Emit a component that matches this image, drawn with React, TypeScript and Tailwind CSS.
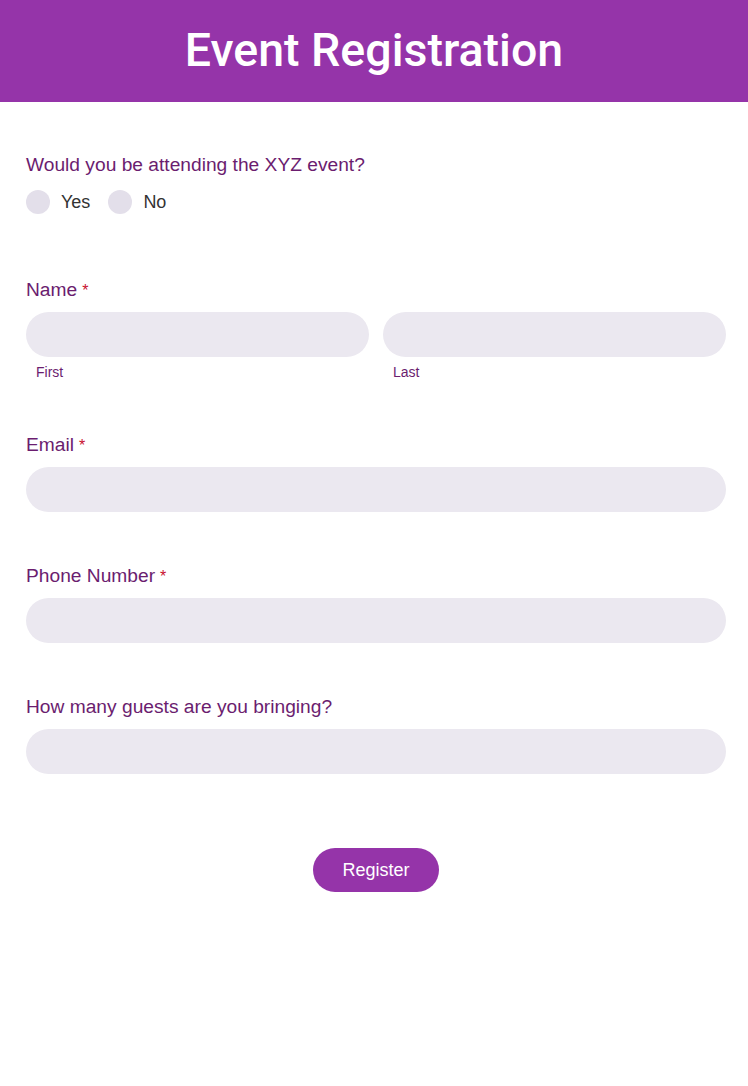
import React from "react";

function Label({ text, required }: { text: string; required?: boolean }) {
  return (
    <div className="h-[22px] text-[19.2px] leading-[22px] text-[#6b1d6f]">
      {text}
      {required && <span className="ml-[5px] text-[16px] leading-none text-[#c8102e]">*</span>}
    </div>
  );
}

function Input() {
  return <div className="h-[45px] w-full rounded-full bg-[#ebe8f0]" />;
}

export default function App() {
  return (
    <div className="min-h-[1086px] w-full bg-white" style={{ fontFamily: '"Liberation Sans", Arial, sans-serif' }}>
      <div className="flex h-[102px] items-center justify-center bg-[#9534a9]">
        <h1 className="text-[46.5px] font-medium text-white" style={{ fontFamily: "Roboto, sans-serif" }}>
          Event Registration
        </h1>
      </div>
      <div className="pl-[26px] pr-[22px] pt-[52px]">
        <Label text="Would you be attending the XYZ event?" />
        <div className="mt-[14px] flex items-center">
          <div className="h-[24px] w-[24px] rounded-full bg-[#e3dfea]" />
          <span className="ml-[11px] text-[18px] leading-[22px] text-[#333]">Yes</span>
          <div className="ml-[18px] h-[24px] w-[24px] rounded-full bg-[#e3dfea]" />
          <span className="ml-[11px] text-[18px] leading-[22px] text-[#333]">No</span>
        </div>

        <div className="mt-[65px]">
          <Label text="Name" required />
          <div className="mt-[11px] flex gap-[14px]">
            <div className="flex-1">
              <Input />
              <div className="mt-[7px] pl-[10px] text-[14px] leading-[17px] text-[#6b1d6f]">First</div>
            </div>
            <div className="flex-1">
              <Input />
              <div className="mt-[7px] pl-[10px] text-[14px] leading-[17px] text-[#6b1d6f]">Last</div>
            </div>
          </div>
        </div>

        <div className="mt-[53px]">
          <Label text="Email" required />
          <div className="mt-[11px]"><Input /></div>
        </div>

        <div className="mt-[53px]">
          <Label text="Phone Number" required />
          <div className="mt-[11px]"><Input /></div>
        </div>

        <div className="mt-[53px]">
          <Label text="How many guests are you bringing?" />
          <div className="mt-[11px]"><Input /></div>
        </div>

        <div className="mt-[74px] flex justify-center">
          <button className="h-[44px] w-[126px] rounded-full bg-[#9534a9] text-[18px] text-white">Register</button>
        </div>
      </div>
    </div>
  );
}
